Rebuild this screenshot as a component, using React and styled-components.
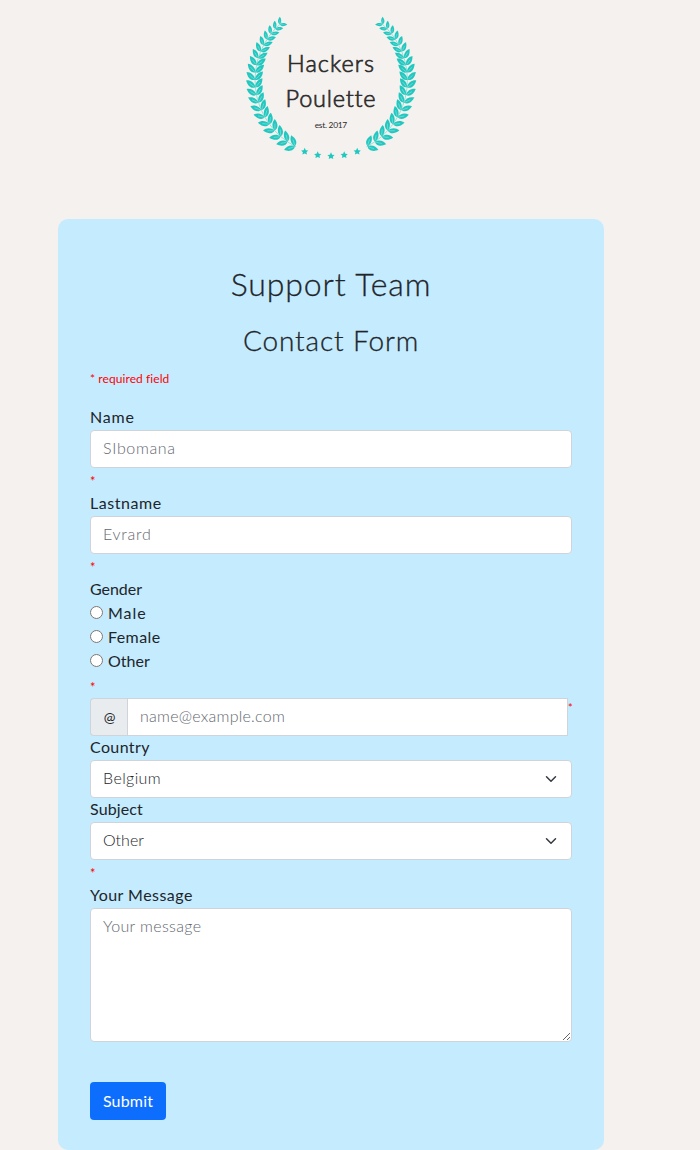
import React from 'react';
import styled, { createGlobalStyle } from 'styled-components';

const GlobalStyle = createGlobalStyle`
  *, *::before, *::after { box-sizing: border-box; }
  body {
    margin: 0;
    background: #f5f1ee;
    color: #212529;
    font-family: Lato, 'Open Sans', sans-serif;
    font-size: 16px;
    line-height: 1.5;
    font-variant-ligatures: none;
  }
`;

const Page = styled.main`
  width: 662px;
  min-height: 1150px;
  display: flex;
  flex-direction: column;
  align-items: center;
`;

const Header = styled.header`
  height: 219px;
  padding-top: 8px;
`;

const LogoMark = styled.svg`
  display: block;
`;

const Card = styled.form`
  width: 546px;
  height: 931px;
  padding: 46px 32px 30px;
  display: flex;
  flex-direction: column;
  background: #c5ebff;
  border-radius: 10px;
`;

const Title = styled.h1`
  margin: 0 0 20px;
  font-size: 32px;
  font-weight: 300;
  line-height: 38px;
  letter-spacing: 0.89px;
  text-align: center;
  -webkit-text-stroke: 0.3px #212529;
`;

const Subtitle = styled.h2`
  margin: 0 0 9px;
  font-size: 28px;
  font-weight: 300;
  line-height: 34px;
  letter-spacing: 0.87px;
  text-align: center;
  -webkit-text-stroke: 0.3px #212529;
`;

const Note = styled.p`
  margin: 0 0 16px;
  height: 24px;
  color: #ff0000;
  font-size: 12px;
  line-height: 25px;
  letter-spacing: 0.08px;
`;

const Label = styled.label`
  display: block;
  height: 24px;
  line-height: 22px;
  letter-spacing: ${(p) => p.$track}px;
`;

const Star = styled.span`
  display: block;
  height: 24px;
  color: #ff0000;
  font-size: 13px;
  line-height: 27px;
`;

const controlStyle = `
  display: block;
  width: 100%;
  border: 1px solid #ced4da;
  border-radius: 4px;
  background-color: #fff;
  color: #212529;
  font-family: inherit;
  font-size: 16px;
  font-weight: 300;
  line-height: 24px;
  outline: none;
  &::placeholder { color: #5f6870; opacity: 1; }
`;

const Input = styled.input`
  ${controlStyle}
  height: 38px;
  padding: 4px 12px 8px;
  letter-spacing: ${(p) => p.$track}px;
`;

const TextArea = styled.textarea`
  ${controlStyle}
  height: 134px;
  padding: 5px 12px 7px;
  letter-spacing: 0.35px;
  resize: vertical;
`;

const SelectWrap = styled.div`
  display: grid;
  align-items: center;
  & > * { grid-area: 1 / 1; }
`;

const SelectBox = styled.select`
  ${controlStyle}
  height: 38px;
  padding: 5px 36px 7px 12px;
  letter-spacing: ${(p) => p.$track}px;
  appearance: none;
`;

const Chevron = styled.svg`
  justify-self: end;
  margin-right: 13px;
  pointer-events: none;
`;

const RadioRow = styled.label`
  height: 24px;
  display: flex;
  align-items: flex-start;
  gap: 5px;
  line-height: 22px;
  letter-spacing: ${(p) => p.$track}px;
`;

const Radio = styled.input`
  width: 13px;
  height: 13px;
  margin: 4px 0 0;
`;

const EmailGroup = styled.div`
  display: flex;
  height: 38px;
`;

const Addon = styled.span`
  flex: none;
  width: 38px;
  border: 1px solid #ced4da;
  border-right: 0;
  border-radius: 4px 0 0 4px;
  background: #e9ecef;
  line-height: 35px;
  text-align: center;
  font-size: 14px;
`;

const EmailInput = styled(Input)`
  flex: 1;
  min-width: 0;
  margin-left: -1px;
  border-radius: 0;
`;

const EmailStar = styled.span`
  width: 4px;
  color: #ff0000;
  font-size: 11px;
  line-height: 19px;
`;

const SubmitButton = styled.button`
  width: 76px;
  height: 38px;
  margin-top: 40px;
  padding: 0 0 1px;
  border: 0;
  border-radius: 4px;
  background: #0d6efd;
  color: #fff;
  font: 400 16px/24px Lato, 'Open Sans', sans-serif;
  letter-spacing: 0.17px;
`;

const CENTER = { x: 94, y: 72, r: 75 };
const LEAF = 'M0 0C1.2 -3.6 6 -4.8 11.6 -1.2C8.8 2 3.8 2.8 0 0Z';

function pointAt(deg) {
  const a = (deg * Math.PI) / 180;
  return [CENTER.x + CENTER.r * Math.cos(a), CENTER.y + CENTER.r * Math.sin(a)];
}

const STEPS = 20;
const leaves = Array.from({ length: STEPS }, (_, i) => {
  const t = i / (STEPS - 1);
  const deg = 118 + 110 * (1.16 * t - 0.16 * t * t);
  const [x, y] = pointAt(deg);
  const scale = t < 0.6 ? 0.98 : 0.98 - (t - 0.6) * 0.85;
  return { x, y, heading: deg + 90, scale };
});

function Leaf({ transform }) {
  return (
    <g transform={transform}>
      <path d={LEAF} />
      <path d="M1 -0.4L7 -1" stroke="#8fe0db" strokeWidth="0.6" />
    </g>
  );
}

function Branch() {
  const [sx, sy] = pointAt(117);
  const [ex, ey] = pointAt(230);
  return (
    <g fill="#22c8c0">
      <path
        d={`M${sx} ${sy}A${CENTER.r} ${CENTER.r} 0 0 1 ${ex} ${ey}`}
        fill="none"
        stroke="#7fdcd6"
        strokeWidth="0.8"
      />
      {leaves.map((l) => (
        <g key={l.heading} transform={`translate(${l.x} ${l.y}) rotate(${l.heading}) scale(${l.scale})`}>
          <Leaf transform="rotate(-42)" />
          <Leaf transform="scale(1 -1) rotate(-38)" />
        </g>
      ))}
    </g>
  );
}

const STAR_POINTS = '0,-3.7 1.1,-1.3 3.6,-1.1 1.8,0.7 2.3,3.1 0,1.9 -2.3,3.1 -1.8,0.7 -3.6,-1.1 -1.1,-1.3';
const stars = [[68.7, 143.5], [81.7, 147], [95, 148], [108.2, 147], [121.2, 143.5]];

function Logo() {
  return (
    <LogoMark width="190" height="160" viewBox="0 0 190 160" role="img" aria-label="Hackers Poulette">
      <Branch />
      <g transform="translate(190.4 0) scale(-1 1)">
        <Branch />
      </g>
      {stars.map(([x, y]) => (
        <polygon key={x} points={STAR_POINTS} transform={`translate(${x} ${y})`} fill="#22c8c0" />
      ))}
      <g fill="#2b2b2b" fontFamily="Lato, sans-serif">
        <text x="51" y="63.8" fontSize="23.5" fontWeight="300" textLength="87" stroke="#2b2b2b" strokeWidth="0.65">Hackers</text>
        <text x="49.5" y="99" fontSize="23.5" fontWeight="300" textLength="90" stroke="#2b2b2b" strokeWidth="0.65">Poulette</text>
        <text x="78.7" y="119.8" fontSize="8.4" textLength="32.5">est. 2017</text>
      </g>
    </LogoMark>
  );
}

function Select({ options, track, ...rest }) {
  return (
    <SelectWrap>
      <SelectBox $track={track} {...rest}>
        {options.map((o) => <option key={o}>{o}</option>)}
      </SelectBox>
      <Chevron width="16" height="12" viewBox="0 0 16 16" fill="none" stroke="#343a40" strokeWidth="2" strokeLinecap="round" strokeLinejoin="round">
        <path d="M2 5l6 6 6-6" />
      </Chevron>
    </SelectWrap>
  );
}

export default function App() {
  return (
    <>
      <GlobalStyle />
      <Page>
        <Header><Logo /></Header>
        <Card>
          <Title>Support Team</Title>
          <Subtitle>Contact Form</Subtitle>
          <Note>* required field</Note>

          <Label htmlFor="name" $track={0.8}>Name</Label>
          <Input id="name" placeholder="SIbomana" $track={0.65} />
          <Star>*</Star>

          <Label htmlFor="lastname" $track={0.55}>Lastname</Label>
          <Input id="lastname" placeholder="Evrard" $track={0.75} />
          <Star>*</Star>

          <Label as="span" $track={-0.05}>Gender</Label>
          <RadioRow $track={0.95}><Radio type="radio" name="gender" />Male</RadioRow>
          <RadioRow $track={0.4}><Radio type="radio" name="gender" />Female</RadioRow>
          <RadioRow $track={0}><Radio type="radio" name="gender" />Other</RadioRow>
          <Star>*</Star>

          <EmailGroup>
            <Addon>@</Addon>
            <EmailInput placeholder="name@example.com" $track={0.25} />
            <EmailStar>*</EmailStar>
          </EmailGroup>

          <Label htmlFor="country" $track={0.38}>Country</Label>
          <Select id="country" options={['Belgium']} track={0.4} />
          <Label htmlFor="subject" $track={0.12}>Subject</Label>
          <Select id="subject" options={['Other']} track={0} />
          <Star>*</Star>

          <Label htmlFor="message" $track={0.46}>Your Message</Label>
          <TextArea id="message" placeholder="Your message" />
          <SubmitButton type="button">Submit</SubmitButton>
        </Card>
      </Page>
    </>
  );
}
